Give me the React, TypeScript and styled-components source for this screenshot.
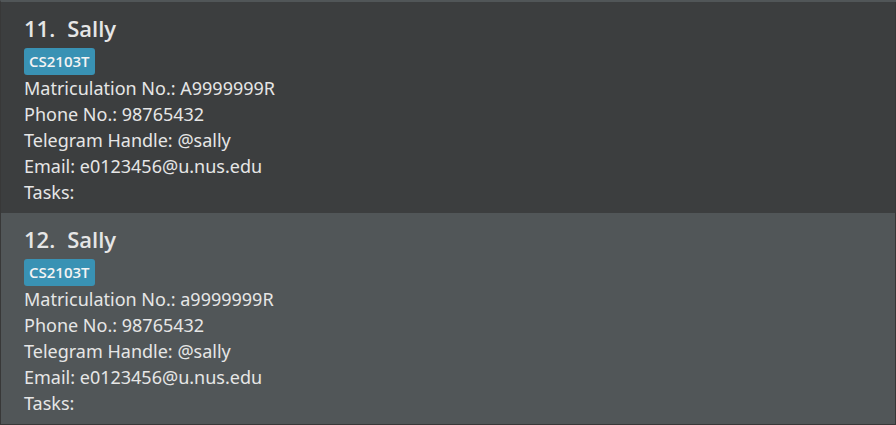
import React from "react";
import styled, { createGlobalStyle } from "styled-components";

const GlobalStyle = createGlobalStyle`
  * { box-sizing: border-box; }
  body { margin: 0; background: #383838; }
`;

const List = styled.ul`
  list-style: none;
  margin: 0;
  padding: 0 1px 1px 0;
  border-top: 2px solid #515658;
  border-left: 1px solid #383838;
  font-family: "Noto Sans", "Open Sans", sans-serif;
  color: #e6e6e6;
`;

const Card = styled.li<{ $shade: string }>`
  padding: 11px 23px 8px;
  background: ${(p) => p.$shade};
`;

const Name = styled.h2`
  display: flex;
  gap: 12px;
  margin: 0 0 5px;
  font-family: "Open Sans", "Noto Sans", sans-serif;
  font-size: 22px;
  line-height: 30px;
  font-weight: 600;
`;

const Tag = styled.span`
  display: block;
  width: fit-content;
  padding: 0 5px;
  border-radius: 3px;
  background: #3992b4;
  color: #f4f4f4;
  font-family: "Open Sans", "Noto Sans", sans-serif;
  font-size: 15px;
  font-weight: 600;
  line-height: 27px;
`;

const Detail = styled.p`
  margin: 0;
  font-size: 18px;
  line-height: 26px;
`;

const people = [
  { index: 11, matric: "A9999999R", shade: "#3c3e3f" },
  { index: 12, matric: "a9999999R", shade: "#515658" },
];

export default function App() {
  return (
    <>
      <GlobalStyle />
      <List>
        {people.map((p) => (
          <Card key={p.index} $shade={p.shade}>
            <Name><span>{p.index}.</span><span>Sally</span></Name>
            <Tag>CS2103T</Tag>
            <Detail>Matriculation No.: {p.matric}</Detail>
            <Detail>Phone No.: 98765432</Detail>
            <Detail>Telegram Handle: @sally</Detail>
            <Detail>Email: e0123456@u.nus.edu</Detail>
            <Detail>Tasks:</Detail>
          </Card>
        ))}
      </List>
    </>
  );
}
